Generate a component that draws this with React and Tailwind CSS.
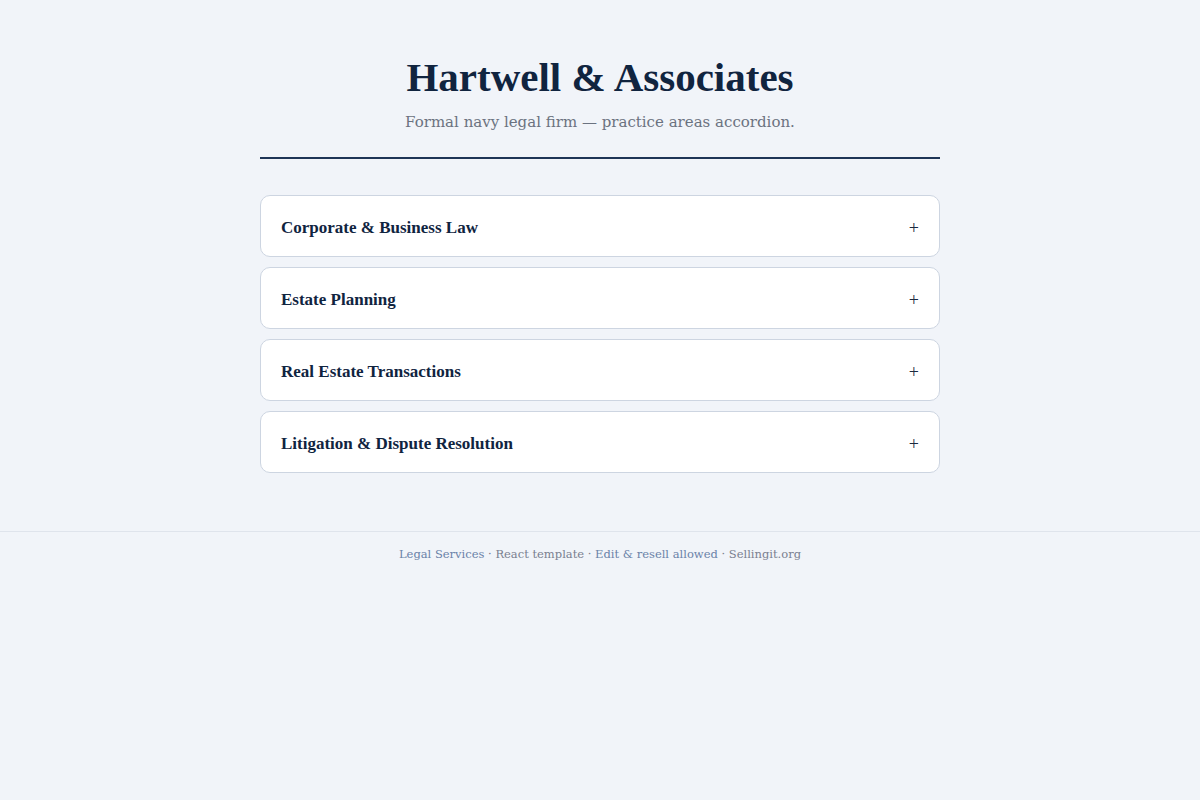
import React, { useState } from "react";

const areas = [
  {
    id: "corporate",
    title: "Corporate & Business Law",
    body: "Entity formation, governance, mergers and acquisitions, and commercial contracts for businesses of every size.",
  },
  {
    id: "estate",
    title: "Estate Planning",
    body: "Wills, trusts, powers of attorney and succession planning tailored to protect your family and assets.",
  },
  {
    id: "realestate",
    title: "Real Estate Transactions",
    body: "Purchase and sale agreements, title review, leasing and closings for residential and commercial property.",
  },
  {
    id: "litigation",
    title: "Litigation & Dispute Resolution",
    body: "Representation in civil litigation, arbitration and mediation, with a focus on efficient resolution.",
  },
];

const display = { fontFamily: '"Liberation Serif", "DejaVu Serif", serif' };
const text = { fontFamily: '"DejaVu Serif", "Liberation Serif", serif' };

function AreaItem({ area, open, onToggle }) {
  return (
    <div className="rounded-[10px] border border-[#cdd5e1] bg-white">
      <button
        type="button"
        onClick={onToggle}
        className="flex h-[60px] w-full items-center justify-between px-5 pt-[4px] text-left"
      >
        <span className="text-[17px] font-bold text-[#10243f]" style={display}>
          {area.title}
        </span>
        <span className="text-[18px] leading-none text-[#1b2a3f]" style={display}>
          {open ? "−" : "+"}
        </span>
      </button>
      {open && (
        <p className="px-5 pb-5 text-[14px] leading-relaxed text-[#4b5563]" style={text}>
          {area.body}
        </p>
      )}
    </div>
  );
}

export default function App() {
  const [openId, setOpenId] = useState(null);

  return (
    <div className="min-h-screen bg-[#f1f4f9]">
      <main className="mx-auto w-[680px] pt-[52px]">
        <header className="border-b-2 border-[#1e3556] pb-[25px] text-center">
          <h1 className="text-[41px] font-bold leading-[50px] text-[#10243f]" style={display}>
            Hartwell &amp; Associates
          </h1>
          <p className="mt-[10px] text-[15px] leading-[20px] text-[#6b7280]" style={text}>
            Formal navy legal firm — practice areas accordion.
          </p>
        </header>

        <section className="mt-[36px] grid gap-[10px]">
          {areas.map((area) => (
            <AreaItem
              key={area.id}
              area={area}
              open={openId === area.id}
              onToggle={() => setOpenId(openId === area.id ? null : area.id)}
            />
          ))}
        </section>
      </main>

      <footer
        className="mt-[58px] border-t border-[#dfe4ec] pb-[12px] pt-[14px] text-center text-[11.5px] text-[#7a8090]"
        style={text}
      >
        <span className="text-[#6a82a8]">Legal Services</span> · React template ·{" "}
        <span className="text-[#6a82a8]">Edit &amp; resell allowed</span> · Sellingit.org
      </footer>
    </div>
  );
}
